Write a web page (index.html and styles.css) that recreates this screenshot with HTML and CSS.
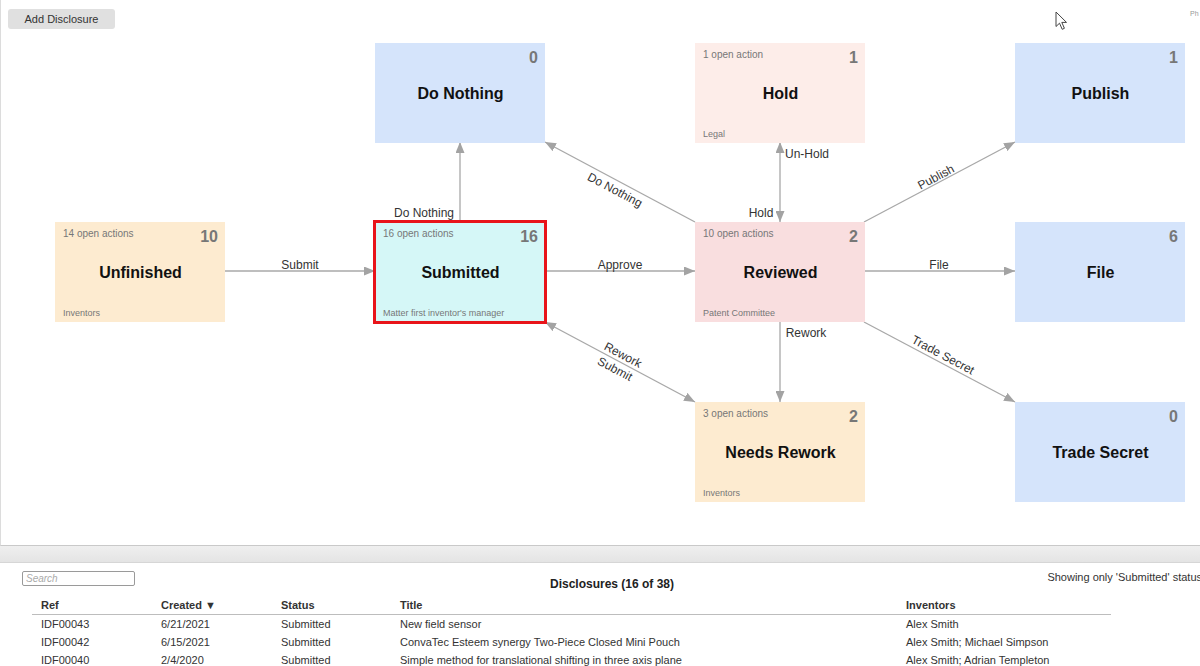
FILE: index.html
```html
<!DOCTYPE html>
<html>
<head>
<meta charset="utf-8">
<link rel="stylesheet" href="styles.css">
</head>
<body>
<div class="top">
  <div class="toolbar">
    <button class="btn">Add Disclosure</button>
    <div class="phase">Ph</div>
  </div>
  <div class="canvas">
    <svg class="edges" width="1200" height="545" viewBox="0 0 1200 545">
      <defs>
        <marker id="ah" markerWidth="11" markerHeight="9" refX="11" refY="4.5" orient="auto-start-reverse" markerUnits="userSpaceOnUse">
          <path d="M0,0 L11,4.5 L0,9 z" fill="#a3a3a3"/>
        </marker>
      </defs>
      <g stroke="#a8a8a8" stroke-width="1.3" fill="none">
        <path d="M225,271 L375,271" marker-end="url(#ah)"/>
        <path d="M460,222 L460,142" marker-end="url(#ah)"/>
        <path d="M545,271 L695,271" marker-end="url(#ah)"/>
        <path d="M695,222 L545,142" marker-end="url(#ah)"/>
        <path d="M780,142 L780,222" marker-start="url(#ah)" marker-end="url(#ah)"/>
        <path d="M864,222 L1015,142" marker-end="url(#ah)"/>
        <path d="M864,271 L1015,271" marker-end="url(#ah)"/>
        <path d="M780,322 L780,402" marker-end="url(#ah)"/>
        <path d="M864,322 L1015,402" marker-end="url(#ah)"/>
        <path d="M545,322 L695,402" marker-start="url(#ah)" marker-end="url(#ah)"/>
      </g>
      <g class="elabel" text-anchor="middle" dominant-baseline="central">
        <text x="300" y="265">Submit</text>
        <text x="424" y="213">Do Nothing</text>
        <text x="620" y="265">Approve</text>
        <text x="615" y="190" transform="rotate(28 615 190)">Do Nothing</text>
        <text x="807" y="154">Un-Hold</text>
        <text x="761" y="213">Hold</text>
        <text x="936" y="177" transform="rotate(-28 936 177)">Publish</text>
        <text x="939" y="265">File</text>
        <text x="806" y="333">Rework</text>
        <text x="943" y="355" transform="rotate(28 943 355)">Trade Secret</text>
        <text x="623" y="355" transform="rotate(28 623 355)">Rework</text>
        <text x="615" y="369" transform="rotate(28 615 369)">Submit</text>
      </g>
    </svg>

    <div class="node blue n-donothing">
      <div class="nhead"><span class="acts"></span><span class="count">0</span></div>
      <div class="ntitle">Do Nothing</div>
      <div class="nfoot"></div>
    </div>
    <div class="node rose n-hold">
      <div class="nhead"><span class="acts">1 open action</span><span class="count">1</span></div>
      <div class="ntitle">Hold</div>
      <div class="nfoot">Legal</div>
    </div>
    <div class="node blue n-publish">
      <div class="nhead"><span class="acts"></span><span class="count">1</span></div>
      <div class="ntitle">Publish</div>
      <div class="nfoot"></div>
    </div>
    <div class="node peach n-unfinished">
      <div class="nhead"><span class="acts">14 open actions</span><span class="count">10</span></div>
      <div class="ntitle">Unfinished</div>
      <div class="nfoot">Inventors</div>
    </div>
    <div class="node cyan selected n-submitted">
      <div class="nhead"><span class="acts">16 open actions</span><span class="count">16</span></div>
      <div class="ntitle">Submitted</div>
      <div class="nfoot">Matter first inventor's manager</div>
    </div>
    <div class="node pink n-reviewed">
      <div class="nhead"><span class="acts">10 open actions</span><span class="count">2</span></div>
      <div class="ntitle">Reviewed</div>
      <div class="nfoot">Patent Committee</div>
    </div>
    <div class="node blue n-file">
      <div class="nhead"><span class="acts"></span><span class="count">6</span></div>
      <div class="ntitle">File</div>
      <div class="nfoot"></div>
    </div>
    <div class="node peach n-rework">
      <div class="nhead"><span class="acts">3 open actions</span><span class="count">2</span></div>
      <div class="ntitle">Needs Rework</div>
      <div class="nfoot">Inventors</div>
    </div>
    <div class="node blue n-trade">
      <div class="nhead"><span class="acts"></span><span class="count">0</span></div>
      <div class="ntitle">Trade Secret</div>
      <div class="nfoot"></div>
    </div>

    <svg class="cursor" width="14" height="20" viewBox="0 0 14 20">
      <path d="M1,1 L1,15.5 L4.5,12.2 L7.2,18.3 L9.4,17.3 L6.8,11.4 L11.5,11.4 Z" fill="#fff" stroke="#444" stroke-width="1" stroke-linejoin="round"/>
    </svg>
  </div>
</div>
<div class="splitter"></div>
<div class="bottom">
  <div class="bar">
    <input class="search" type="text" placeholder="Search">
    <div class="ttl">Disclosures (16 of 38)</div>
    <div class="note">Showing only 'Submitted' status</div>
  </div>
  <table class="grid">
    <colgroup>
      <col class="c-ref"><col class="c-created"><col class="c-status"><col class="c-title"><col class="c-inv">
    </colgroup>
    <thead>
      <tr><th>Ref</th><th>Created ▼</th><th>Status</th><th>Title</th><th>Inventors</th></tr>
    </thead>
    <tbody>
      <tr><td>IDF00043</td><td>6/21/2021</td><td>Submitted</td><td>New field sensor</td><td>Alex Smith</td></tr>
      <tr><td>IDF00042</td><td>6/15/2021</td><td>Submitted</td><td>ConvaTec Esteem synergy Two-Piece Closed Mini Pouch</td><td>Alex Smith; Michael Simpson</td></tr>
      <tr><td>IDF00040</td><td>2/4/2020</td><td>Submitted</td><td>Simple method for translational shifting in three axis plane</td><td>Alex Smith; Adrian Templeton</td></tr>
    </tbody>
  </table>
</div>
</body>
</html>
```
FILE: styles.css
```css
html, body {
  margin: 0;
  padding: 0;
}
body {
  width: 1200px;
  height: 666px;
  overflow: hidden;
  background: #fff;
  font-family: "Liberation Sans", Arial, sans-serif;
  color: #333;
}
.top {
  position: relative;
  height: 546px;
  box-sizing: border-box;
  border-left: 1px solid #dcdcdc;
  border-bottom: 1px solid #c9c9c9;
}
.toolbar {
  display: flex;
  align-items: flex-start;
  padding: 9px 0 0 7px;
}
.btn {
  width: 107px;
  height: 20px;
  border: none;
  border-radius: 3px;
  background: #e0e0e0;
  color: #333;
  font-family: "Liberation Sans", Arial, sans-serif;
  font-size: 11px;
  padding: 0;
}
.phase {
  margin-left: auto;
  width: 10px;
  white-space: nowrap;
  font-size: 7px;
  color: #999;
  margin-top: 1px;
}
.canvas {
  position: absolute;
  inset: 0;
}
.edges {
  position: absolute;
  left: -1px;
  top: 0;
}
.elabel text {
  font-family: "Liberation Sans", Arial, sans-serif;
  font-size: 12px;
  fill: #333;
}
.node {
  position: absolute;
  width: 170px;
  height: 100px;
  box-sizing: border-box;
  padding: 6px 7px 4px 8px;
  display: flex;
  flex-direction: column;
}
.blue { background: #d5e4fb; }
.peach { background: #fdebd0; }
.rose { background: #fdede9; }
.pink { background: #f9dedf; }
.cyan { background: #d5f7f7; }
.selected {
  outline: 3px solid #e8141a;
  outline-offset: -1px;
}
.nhead {
  display: flex;
  justify-content: space-between;
  align-items: flex-start;
}
.acts {
  font-size: 10px;
  line-height: 12px;
  color: #777;
}
.count {
  font-size: 16px;
  line-height: 18px;
  font-weight: bold;
  color: #777;
}
.ntitle {
  flex: 1;
  display: flex;
  align-items: center;
  justify-content: center;
  margin-bottom: 9px;
  font-size: 16px;
  font-weight: bold;
  color: #111;
}
.nfoot {
  font-size: 9px;
  line-height: 10px;
  height: 10px;
  color: #777;
}
.n-donothing { left: 374px; top: 43px; }
.n-hold { left: 694px; top: 43px; }
.n-publish { left: 1014px; top: 43px; }
.n-unfinished { left: 54px; top: 222px; }
.n-submitted { left: 374px; top: 222px; }
.n-reviewed { left: 694px; top: 222px; }
.n-file { left: 1014px; top: 222px; }
.n-rework { left: 694px; top: 402px; }
.n-trade { left: 1014px; top: 402px; }
.cursor {
  position: absolute;
  left: 1054px;
  top: 11px;
}
.splitter {
  height: 16px;
  background: linear-gradient(#efefef, #e4e4e4);
  border-bottom: 1px solid #d6d6d6;
}
.bottom {
  width: 1224px;
  box-sizing: border-box;
  padding: 8px 22px 0;
}
.bar {
  display: grid;
  grid-template-columns: 1fr auto 1fr;
  align-items: start;
}
.search {
  width: 113px;
  height: 15px;
  box-sizing: border-box;
  border: 1px solid #9a9a9a;
  border-radius: 2px;
  padding: 0 3px;
  margin: 0;
  font-family: "Liberation Sans", Arial, sans-serif;
  font-size: 10px;
  font-style: italic;
}
.search::placeholder {
  color: #aaa;
}
.ttl {
  margin-top: 6px;
  font-size: 12px;
  line-height: 14px;
  font-weight: bold;
  color: #222;
}
.note {
  justify-self: end;
  font-size: 11px;
  line-height: 13px;
  color: #333;
  white-space: nowrap;
}
.grid {
  margin: 6px 0 0 10px;
  width: 1079px;
  border-collapse: collapse;
  table-layout: fixed;
  font-size: 11px;
}
.c-ref { width: 120px; }
.c-created { width: 120px; }
.c-status { width: 119px; }
.c-title { width: 506px; }
.c-inv { width: 214px; }
.grid th {
  text-align: left;
  font-weight: bold;
  line-height: 17px;
  padding: 0 9px;
  border-bottom: 1px solid #bdbdbd;
  color: #333;
}
.grid td {
  line-height: 18px;
  padding: 0 9px;
  white-space: nowrap;
  color: #333;
}
```
